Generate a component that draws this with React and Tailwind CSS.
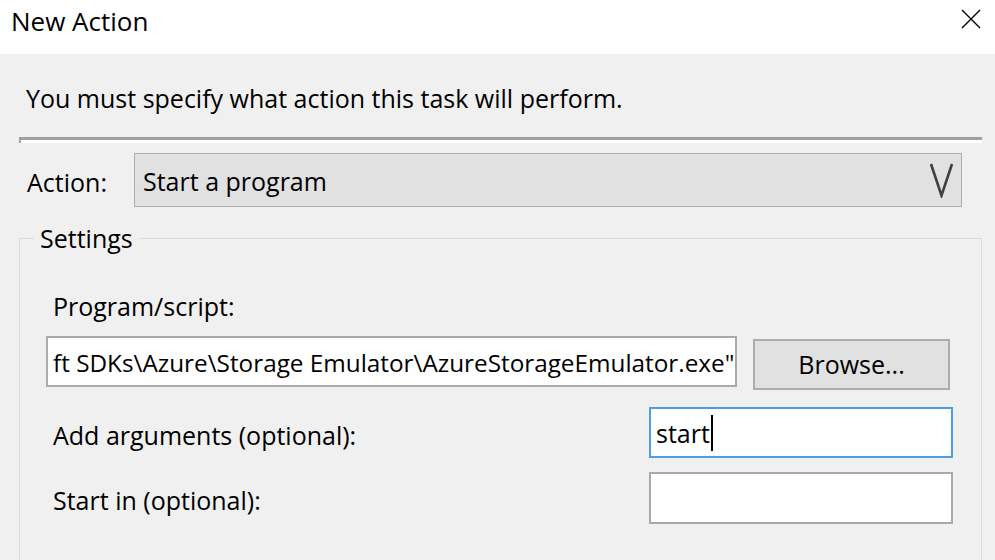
export default function App() {
  const font = { fontFamily: '"Open Sans", "Noto Sans", sans-serif' };
  return (
    <div
      className="w-[995px] h-[560px] overflow-hidden bg-[#f0f0f0] text-black text-[25px] leading-[33px]"
      style={font}
    >
      {/* Title bar */}
      <div className="h-[54px] bg-white flex items-start justify-between pl-[11px] pr-[14px]">
        <div className="pt-[4px] text-[26px] leading-[34px]">New Action</div>
        <svg className="mt-[9px]" width="20" height="20" viewBox="0 0 20 20">
          <path d="M1 1 L19 19 M19 1 L1 19" stroke="#000" strokeWidth="1.4" fill="none" />
        </svg>
      </div>

      {/* Body */}
      <div className="pl-[19px] pr-[13px]">
        <div className="pt-[28px] pl-[7px] whitespace-nowrap">
          You must specify what action this task will perform.
        </div>

        <div className="mt-[22px] h-[6px] bg-white border-t-[3px] border-l-[2px] border-t-[#a0a0a0] border-l-[#a0a0a0]" />

        {/* Action row */}
        <div className="mt-[10px] flex items-center">
          <div className="w-[115px] pl-[8px] pt-[4px]">Action:</div>
          <div className="w-[828px] h-[54px] bg-[#e1e1e1] border border-[#adadad] flex items-center justify-between pl-[8px] pr-[7px]">
            <span className="pt-[3px]">Start a program</span>
            <svg width="25" height="36" viewBox="0 0 25 36">
              <polyline points="2,2 12.5,33.5 23,2" stroke="#404040" strokeWidth="2.6" fill="none" />
            </svg>
          </div>
        </div>

        {/* Settings group */}
        <fieldset className="mt-[15px] border border-[#dcdcdc] h-[400px] pl-[26px] pr-[28px]">
          <legend className="ml-[-12px] px-[6px]">Settings</legend>

          <div className="mt-[35px] pl-[7px]">Program/script:</div>

          <div className="mt-[13px] flex items-start">
            <div className="w-[691px] h-[51px] bg-white border-2 border-[#aaaaaa] flex items-center pl-[5px] overflow-hidden whitespace-nowrap">
              <span className="pt-[2px] text-[24.3px]">ft SDKs\Azure\Storage Emulator\AzureStorageEmulator.exe"</span>
            </div>
            <div className="ml-[16px] mt-[3px] w-[197px] h-[51px] bg-[#e1e1e1] border-2 border-[#adadad] flex items-center justify-center">
              Browse...
            </div>
          </div>

          <div className="mt-[17px] flex items-start justify-between">
            <div className="pl-[7px] pt-[12px]">Add arguments (optional):</div>
            <div className="w-[304px] h-[51px] bg-white border-2 border-[#4a9fe8] flex items-center pl-[5px]">
              <span className="pt-[2px]">start</span>
              <span className="ml-[1px] w-[2px] h-[36px] bg-black" />
            </div>
          </div>

          <div className="mt-[14px] flex items-start justify-between">
            <div className="pl-[7px] pt-[12px]">Start in (optional):</div>
            <div className="w-[304px] h-[52px] bg-white border-2 border-[#aaaaaa]" />
          </div>
        </fieldset>
      </div>
    </div>
  );
}
